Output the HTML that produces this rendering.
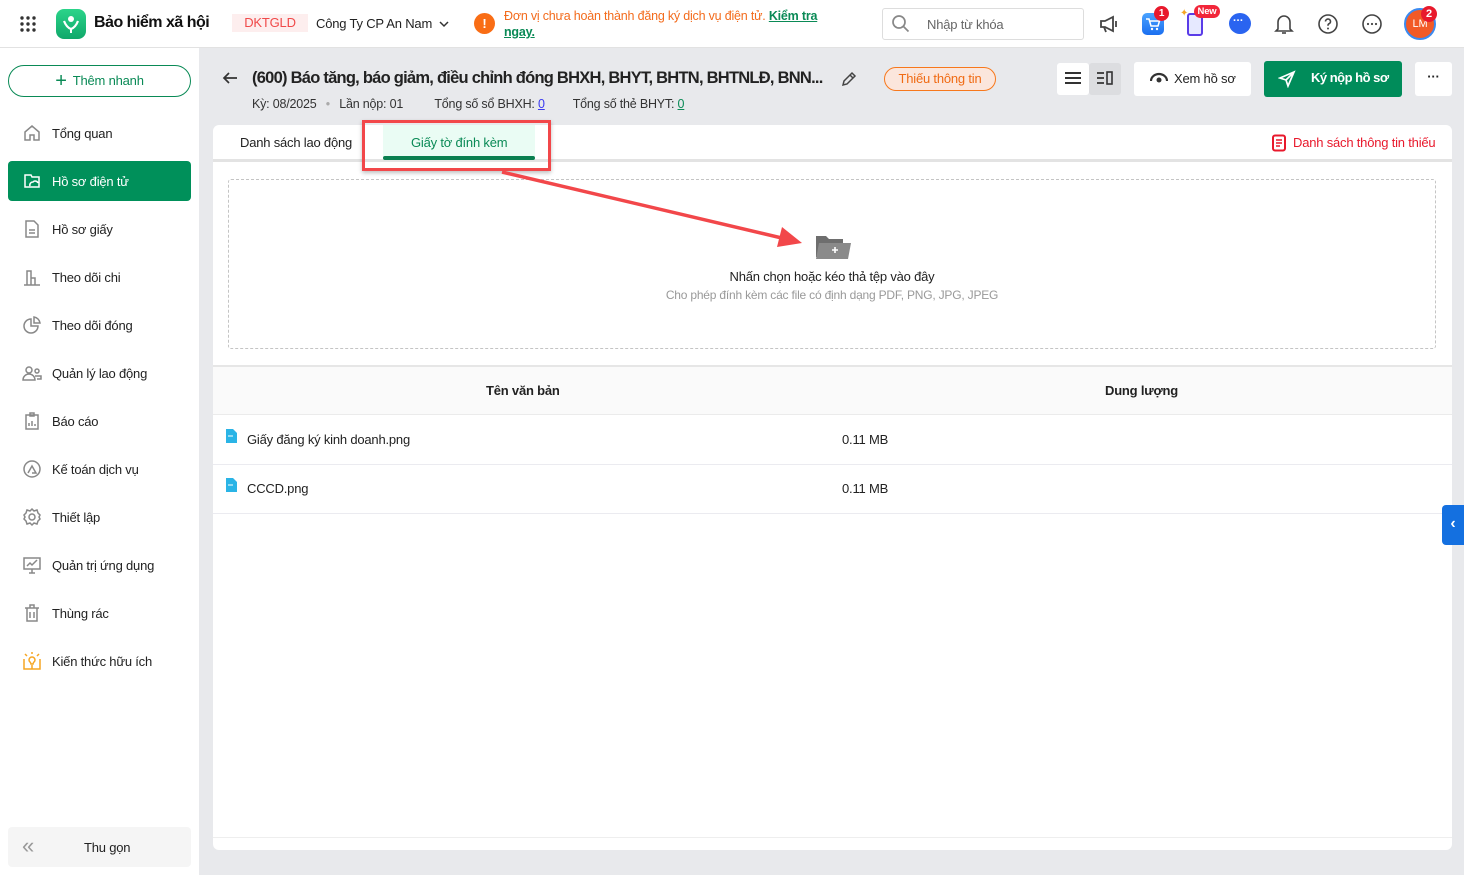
<!DOCTYPE html>
<html><head><meta charset="utf-8"><style>
*{box-sizing:border-box;margin:0;padding:0}
body{width:1464px;height:875px;overflow:hidden;font-family:"Liberation Sans","Noto Sans CJK SC",sans-serif;font-size:13px;color:#222;background:#e8e9ec;position:relative;letter-spacing:-0.2px}
.a{position:absolute}
.top{left:0;top:0;width:1464px;height:48px;background:#fff;border-bottom:1px solid #e2e2e2}
.side{left:0;top:48px;width:199px;height:827px;background:#fff}
.nav{left:8px;width:183px;height:40px;display:flex;align-items:center;padding-left:14px;font-size:13px;color:#222}
.nav svg{width:20px;height:20px;margin-right:10px;fill:none;stroke:#888;stroke-width:1.5}
.nav.act{background:#00905a;color:#fff;border-radius:4px}
.nav.act svg{stroke:#fff}
.card{left:213px;top:125px;width:1239px;height:725px;background:#fff;border-radius:6px}
</style></head><body>
<div class="a top"></div>
<svg class="a" style="left:19px;top:15px" width="18" height="18" viewBox="0 0 18 18" fill="#333"><circle cx="3" cy="3" r="1.7"/><circle cx="9" cy="3" r="1.7"/><circle cx="15" cy="3" r="1.7"/><circle cx="3" cy="9" r="1.7"/><circle cx="9" cy="9" r="1.7"/><circle cx="15" cy="9" r="1.7"/><circle cx="3" cy="15" r="1.7"/><circle cx="9" cy="15" r="1.7"/><circle cx="15" cy="15" r="1.7"/></svg>
<div class="a" style="left:56px;top:9px;width:30px;height:30px;border-radius:8px;background:linear-gradient(#2bd48a,#10a86a)"></div>
<svg class="a" style="left:60px;top:13px" width="22" height="22" viewBox="0 0 22 22"><circle cx="11" cy="6" r="3" fill="#fff"/><path d="M4 8c2 5 4 7 7 8 3-1 5-3 7-8" stroke="#fff" stroke-width="2.2" fill="none"/><path d="M11 16v4" stroke="#fff" stroke-width="2"/></svg>
<div class="a" style="left:94px;top:14px;font-size:16px;font-weight:bold;color:#111;letter-spacing:-0.5px">Bảo hiểm xã hội</div>
<div class="a" style="left:232px;top:14px;width:76px;height:18px;background:#fdeeee;color:#f04a4a;text-align:center;font-size:13px;line-height:18px">DKTGLD</div>
<div class="a" style="left:316px;top:16px;font-size:13px;color:#222">Công Ty CP An Nam</div>
<svg class="a" style="left:438px;top:19px" width="12" height="10" viewBox="0 0 12 10"><path d="M2 3l4 4 4-4" stroke="#333" stroke-width="1.5" fill="none"/></svg>
<div class="a" style="left:474px;top:13px;width:21px;height:21px;border-radius:50%;background:#f96d15;color:#fff;text-align:center;font-weight:bold;line-height:21px">!</div>
<div class="a" style="left:504px;top:8px;width:345px;font-size:12.5px;line-height:16px;color:#f36b1c">Đơn vị chưa hoàn thành đăng ký dịch vụ điện tử. <b style="color:#0a8a56;text-decoration:underline">Kiểm tra ngay.</b></div>
<div class="a" style="left:882px;top:8px;width:202px;height:32px;border:1px solid #ddd;border-radius:3px"></div>
<svg class="a" style="left:890px;top:13px" width="22" height="22" viewBox="0 0 22 22"><circle cx="9" cy="9" r="6" stroke="#888" stroke-width="1.7" fill="none"/><path d="M13.5 13.5l5 5" stroke="#888" stroke-width="1.7"/></svg>
<div class="a" style="left:927px;top:17px;color:#666">Nhập từ khóa</div>
<svg class="a" style="left:1098px;top:14px" width="22" height="20" viewBox="0 0 22 20"><path d="M3 7h4l8-4v14l-8-4H3z M6 13l2 5" stroke="#444" stroke-width="1.8" fill="none"/><path d="M18 7v6" stroke="#444" stroke-width="1.8"/></svg>
<div class="a" style="left:1142px;top:13px;width:22px;height:22px;border-radius:5px;background:linear-gradient(#4aa3ff,#1b6ff0)"></div>
<svg class="a" style="left:1145px;top:17px" width="16" height="14" viewBox="0 0 16 14"><path d="M1 2h3l2 7h7l1.5-5H5" stroke="#fff" stroke-width="1.5" fill="none"/><circle cx="7" cy="12" r="1.2" fill="#fff"/><circle cx="12" cy="12" r="1.2" fill="#fff"/></svg>
<div class="a" style="left:1154px;top:6px;width:15px;height:15px;border-radius:50%;background:#e8192c;color:#fff;font-size:10px;font-weight:bold;text-align:center;line-height:15px">1</div>
<div class="a" style="left:1187px;top:13px;width:16px;height:23px;border:2px solid #5a3ce8;border-radius:3px;background:#e6e9ff"></div>
<div class="a" style="left:1180px;top:8px;color:#f6a623;font-size:10px">✦</div>
<div class="a" style="left:1194px;top:5px;width:26px;height:13px;border-radius:7px;background:#f2263a;color:#fff;font-size:9.5px;font-weight:bold;text-align:center;line-height:13px">New</div>
<div class="a" style="left:1229px;top:13px;width:22px;height:21px;border-radius:50%;background:#2a64f0"></div>
<div class="a" style="left:1233px;top:15px;color:#fff;font-size:11px;font-weight:bold">···</div>
<svg class="a" style="left:1273px;top:12px" width="22" height="24" viewBox="0 0 22 24"><path d="M5 17V10a6 6 0 0 1 12 0v7l2 2H3z" stroke="#444" stroke-width="1.6" fill="none"/><path d="M9 21h4" stroke="#444" stroke-width="1.6"/></svg>
<svg class="a" style="left:1317px;top:13px" width="22" height="22" viewBox="0 0 22 22"><circle cx="11" cy="11" r="9" stroke="#444" stroke-width="1.6" fill="none"/><path d="M8.5 8.5a2.5 2.5 0 1 1 3.5 2.3c-1 .4-1 1-1 2" stroke="#444" stroke-width="1.6" fill="none"/><circle cx="11" cy="15.5" r="1" fill="#444"/></svg>
<svg class="a" style="left:1361px;top:13px" width="22" height="22" viewBox="0 0 22 22"><circle cx="11" cy="11" r="9" stroke="#444" stroke-width="1.6" fill="none"/><circle cx="7" cy="11" r="1.1" fill="#444"/><circle cx="11" cy="11" r="1.1" fill="#444"/><circle cx="15" cy="11" r="1.1" fill="#444"/></svg>
<div class="a" style="left:1404px;top:8px;width:32px;height:32px;border-radius:50%;background:#f25a27;border:2px solid #3b8af0;color:#fff;font-size:11px;text-align:center;line-height:28px">LM</div>
<div class="a" style="left:1421px;top:6px;width:16px;height:16px;border-radius:50%;background:#e8192c;color:#fff;font-size:11px;font-weight:bold;text-align:center;line-height:16px">2</div>

<div class="a side"></div>
<div class="a" style="left:8px;top:65px;width:183px;height:32px;border:1.5px solid #0a8a56;border-radius:16px;color:#0a8a56;text-align:center;line-height:29px;font-size:13px"><span style="font-size:20px;vertical-align:-2px;margin-right:6px">+</span>Thêm nhanh</div>
<div class="a nav" style="top:113px"><svg viewBox="0 0 20 20"><path d="M3 9l7-6 7 6v8h-5v-5H8v5H3z"/></svg>Tổng quan</div>
<div class="a nav act" style="top:161px"><svg viewBox="0 0 20 20"><path d="M3 4h6l1 2h7v10H3z M8 15a3 3 0 0 1 3-4 3 3 0 0 1 5 1"/></svg>Hồ sơ điện tử</div>
<div class="a nav" style="top:209px"><svg viewBox="0 0 20 20"><path d="M4 2h8l4 4v12H4z M7 11h6 M7 14h6"/></svg>Hồ sơ giấy</div>
<div class="a nav" style="top:257px"><svg viewBox="0 0 20 20"><path d="M2 18h16 M5 18V4h4v14 M9 11h4v7"/></svg>Theo dõi chi</div>
<div class="a nav" style="top:305px"><svg viewBox="0 0 20 20"><path d="M9 4a7 7 0 1 0 7 7H9z M12 2a7 7 0 0 1 6 6h-6z"/></svg>Theo dõi đóng</div>
<div class="a nav" style="top:353px"><svg viewBox="0 0 20 20"><circle cx="7" cy="7" r="3"/><circle cx="15" cy="8" r="2"/><path d="M1 17a6 6 0 0 1 12 0z M13 13h6v3h-4"/></svg>Quản lý lao động</div>
<div class="a nav" style="top:401px"><svg viewBox="0 0 20 20"><path d="M4 4h12v14H4z M8 2h4v3H8z M7 15v-3 M10 15v-5 M13 15v-2"/></svg>Báo cáo</div>
<div class="a nav" style="top:449px"><svg viewBox="0 0 20 20"><circle cx="10" cy="10" r="8"/><path d="M6 14l4-7 4 7h-4"/></svg>Kế toán dịch vụ</div>
<div class="a nav" style="top:497px"><svg viewBox="0 0 20 20"><circle cx="10" cy="10" r="3"/><path d="M10 2l2 2 3-1 1 3 2 2-1 2 1 2-2 2-1 3-3-1-2 2-2-2-3 1-1-3-2-2 1-2-1-2 2-2 1-3 3 1z"/></svg>Thiết lập</div>
<div class="a nav" style="top:545px"><svg viewBox="0 0 20 20"><path d="M2 3h16v11H2z M7 18h6 M10 14v4 M5 11l3-3 2 2 5-5"/></svg>Quản trị ứng dụng</div>
<div class="a nav" style="top:593px"><svg viewBox="0 0 20 20"><path d="M3 5h14 M8 5V2h4v3 M5 5v13h10V5 M8 9v6 M12 9v6"/></svg>Thùng rác</div>
<div class="a nav" style="top:641px"><svg viewBox="0 0 20 20" style="stroke:#f6a623"><path d="M2 8v10h16V8 M10 18v-4 M7 9a3 3 0 1 1 6 0c0 2-2 2-2 4H9c0-2-2-2-2-4z M10 1v2 M3 3l2 2 M17 3l-2 2"/></svg>Kiến thức hữu ích</div>
<div class="a" style="left:8px;top:827px;width:183px;height:40px;background:#f5f5f5;border-radius:4px"></div>
<div class="a" style="left:22px;top:836px;color:#999;font-size:22px;line-height:20px">«</div>
<div class="a" style="left:84px;top:840px">Thu gọn</div>

<svg class="a" style="left:221px;top:70px" width="18" height="16" viewBox="0 0 18 16"><path d="M16 8H3 M8 3L3 8l5 5" stroke="#333" stroke-width="1.7" fill="none"/></svg>
<div class="a" style="left:252px;top:69px;width:580px;white-space:nowrap;font-size:16.5px;font-weight:bold;color:#222;letter-spacing:-0.75px">(600) Báo tăng, báo giảm, điều chỉnh đóng BHXH, BHYT, BHTN, BHTNLĐ, BNN...</div>
<svg class="a" style="left:840px;top:70px" width="18" height="18" viewBox="0 0 18 18"><path d="M3 15l1-4 8-8 3 3-8 8z M10 5l3 3" stroke="#444" stroke-width="1.5" fill="none"/></svg>
<div class="a" style="left:252px;top:97px;font-size:12.5px;color:#333;white-space:nowrap">Kỳ: 08/2025 <span style="color:#aaa;margin:0 6px">•</span> Lần nộp: 01 <span style="margin-left:28px">Tổng số sổ BHXH: <u style="color:#3a3af0">0</u></span><span style="margin-left:28px">Tổng số thẻ BHYT: <u style="color:#0a8a56">0</u></span></div>
<div class="a" style="left:884px;top:67px;width:112px;height:24px;border:1.5px solid #f7781c;border-radius:12px;background:#fbe6dc;color:#f06b14;text-align:center;line-height:21px">Thiếu thông tin</div>
<div class="a" style="left:1057px;top:63px;width:32px;height:32px;background:#fff;border-radius:3px"></div>
<div class="a" style="left:1089px;top:63px;width:32px;height:32px;background:#dcdde0;border-radius:3px"></div>
<svg class="a" style="left:1064px;top:71px" width="18" height="14" viewBox="0 0 18 14"><path d="M1 2h16 M1 7h16 M1 12h16" stroke="#333" stroke-width="2"/></svg>
<svg class="a" style="left:1096px;top:71px" width="18" height="14" viewBox="0 0 18 14"><path d="M1 2h7 M1 7h7 M1 12h7" stroke="#333" stroke-width="1.8"/><rect x="11" y="1" width="5" height="12" stroke="#333" stroke-width="1.6" fill="none"/></svg>
<div class="a" style="left:1134px;top:62px;width:117px;height:34px;background:#fff;border-radius:3px"></div>
<svg class="a" style="left:1150px;top:72px" width="18" height="12" viewBox="0 0 18 12"><path d="M1 9a8 7 0 0 1 16 0" stroke="#333" stroke-width="2.2" fill="none"/><circle cx="9" cy="8" r="2.5" fill="#333"/></svg>
<div class="a" style="left:1174px;top:71px;color:#222">Xem hồ sơ</div>
<div class="a" style="left:1264px;top:61px;width:138px;height:36px;background:#008c5a;border-radius:3px"></div>
<svg class="a" style="left:1278px;top:70px" width="18" height="18" viewBox="0 0 18 18"><path d="M2 8l14-6-6 14-2-6z M8 10l8-8" stroke="#fff" stroke-width="1.7" fill="none"/></svg>
<div class="a" style="left:1311px;top:70px;color:#fff;font-weight:bold;letter-spacing:-0.5px">Ký nộp hồ sơ</div>
<div class="a" style="left:1415px;top:62px;width:37px;height:34px;background:#fff;border-radius:3px;text-align:center;font-weight:bold;line-height:30px">···</div>

<div class="a card"></div>
<div class="a" style="left:213px;top:159px;width:1239px;height:3px;background:#e3e3e3"></div>
<div class="a" style="left:240px;top:135px">Danh sách lao động</div>
<div class="a" style="left:383px;top:125px;width:152px;height:33px;background:#eafcf4"></div>
<div class="a" style="left:383px;top:156px;width:152px;height:4px;background:#0a7f50;border-radius:2px"></div>
<div class="a" style="left:411px;top:135px;color:#0a8a56">Giấy tờ đính kèm</div>
<div class="a" style="left:362px;top:120px;width:189px;height:51px;border:3px solid #f2474a;box-shadow:0 2px 4px rgba(0,0,0,.25)"></div>
<svg class="a" style="left:1271px;top:134px" width="16" height="18" viewBox="0 0 16 18"><rect x="2" y="1.5" width="12" height="15" rx="2" stroke="#e8192c" stroke-width="2" fill="none"/><path d="M5 6h6 M5 9h6 M5 12h4" stroke="#e8192c" stroke-width="1.6"/></svg>
<div class="a" style="left:1293px;top:135px;color:#e8192c">Danh sách thông tin thiếu</div>
<div class="a" style="left:228px;top:179px;width:1208px;height:170px;border:1px dashed #c4c4c4;border-radius:3px"></div>
<svg class="a" style="left:814px;top:234px" width="38" height="26" viewBox="0 0 38 26"><path d="M2 2h10l3 3h14v18H2z" fill="#6e6e6e"/><path d="M5 9h32l-3 16H2z" fill="#8a8a8a"/><path d="M21 13v6 M18 16h6" stroke="#fff" stroke-width="1.6"/></svg>
<div class="a" style="left:0;width:1664px;top:269px;text-align:center">Nhấn chọn hoặc kéo thả tệp vào đây</div>
<div class="a" style="left:0;width:1664px;top:288px;text-align:center;color:#999;font-size:12px">Cho phép đính kèm các file có định dạng PDF, PNG, JPG, JPEG</div>
<svg class="a" style="left:490px;top:160px" width="320" height="95" viewBox="0 0 320 95"><path d="M12 12L296 79" stroke="#f2474a" stroke-width="3.5"/><path d="M312 83l-20 -16 -5 20z" fill="#f2474a"/></svg>

<div class="a" style="left:213px;top:365px;width:1239px;height:2px;background:#e6e6e6"></div>
<div class="a" style="left:213px;top:367px;width:1239px;height:48px;background:#fafafa;border-bottom:1px solid #ebebeb"></div>
<div class="a" style="left:486px;top:383px;font-weight:bold">Tên văn bản</div>
<div class="a" style="left:1105px;top:383px;font-weight:bold">Dung lượng</div>
<div class="a" style="left:213px;top:464px;width:1239px;height:1px;background:#ebebf0"></div>
<div class="a" style="left:213px;top:513px;width:1239px;height:1px;background:#ebebf0"></div>
<svg class="a" style="left:225px;top:429px" width="12" height="14" viewBox="0 0 12 14"><path d="M1 0h7l4 4v10H1z" fill="#2ab4e6"/><path d="M3 7h5" stroke="#fff"/></svg>
<div class="a" style="left:247px;top:432px">Giấy đăng ký kinh doanh.png</div>
<div class="a" style="left:842px;top:432px">0.11 MB</div>
<svg class="a" style="left:225px;top:478px" width="12" height="14" viewBox="0 0 12 14"><path d="M1 0h7l4 4v10H1z" fill="#2ab4e6"/><path d="M3 7h5" stroke="#fff"/></svg>
<div class="a" style="left:247px;top:481px">CCCD.png</div>
<div class="a" style="left:842px;top:481px">0.11 MB</div>
<div class="a" style="left:213px;top:837px;width:1239px;height:1px;background:#eee"></div>
<div class="a" style="left:1442px;top:505px;width:22px;height:40px;background:#1470e0;border-radius:4px 0 0 4px;color:#fff;font-size:16px;text-align:center;line-height:38px;font-weight:bold">‹</div>
</body></html>
